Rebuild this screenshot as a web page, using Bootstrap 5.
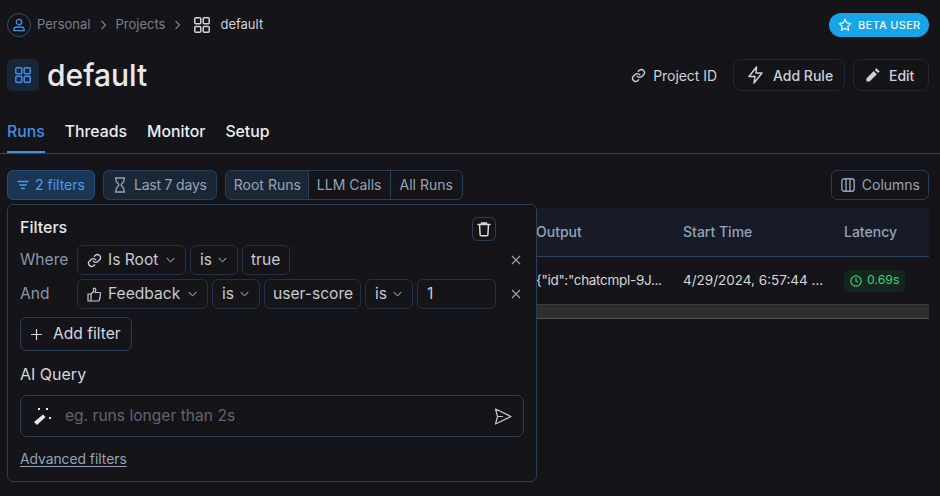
<!doctype html>
<html lang="en"><head><meta charset="utf-8"><title>default</title>
<link rel="stylesheet" href="https://cdn.jsdelivr.net/npm/bootstrap@5.3.0/dist/css/bootstrap.min.css">
<style>
html,body{height:100%}
body{background:#141419;color:#e5e7eb;font-family:Inter,"Noto Sans",sans-serif;font-size:14px;overflow:hidden}
svg{display:block;flex:none}
.shell{padding:13px 11px 0 7px;position:relative;height:496px}
.crumbs{height:24px;font-size:13px;color:#7b7f89}
.avatar{width:24px;height:24px;border:1px solid #33507a;border-radius:50%;color:#3f8fe8;margin-right:6px}
.crumb-sep{margin:0 9px}
.crumb-grid{margin:0 10px 0 4px}
.crumb-cur{color:#d0d3d9}
.beta{height:24px;background:#16a5e6;color:#f4faff;border-radius:12px;font-size:11px;font-weight:500;letter-spacing:.3px;padding:0 9px;gap:6px;width:100px;white-space:nowrap}
.head-row{margin-top:22px;height:32px}
.proj-icon{width:32px;height:32px;background:#18263a;border-radius:5px;color:#3f8fe8;margin-right:8px}
.proj-title{font-size:30px;font-weight:500;color:#e8e9ec;line-height:32px;margin:0}
.plain-act{color:#cdd0d6;font-size:14px;gap:7px;margin-right:16px;letter-spacing:-.05px}
.act-btn{height:32px;border:1px solid #25272e;border-radius:8px;background:transparent;color:#cdd0d6;font-size:14px;font-weight:500;gap:9px;padding:0 0 0 13px;width:112px;white-space:nowrap}
.act-edit{gap:8px;padding:0 0 0 11px;width:76px}
.tab-row{margin:30px -11px 0 -7px;padding:0 7px;border-bottom:1px solid #3a404c;height:33px;gap:20px}
.tab-item{color:#eceef1;font-size:15.8px;font-weight:500;height:32px;line-height:20px;padding-top:1px;text-decoration:none}
.tab-on{color:#3f8fe8;border-bottom:2px solid #3f8fe8}
.tool-row{margin-top:16px;height:30px;gap:8px}
.tool-btn{height:30px;border-radius:6px;border:1px solid #2c3e55;background:#1c2736;color:#94a3b8;font-size:14px;padding:0 9px 1px 10px;gap:8px;white-space:nowrap}
.tool-time{letter-spacing:-.2px}
.tool-blue{background:#1b3654;border-color:#24507f;color:#4a9cf0;padding:0 9px 1px;gap:6px}
.seg{display:flex;height:30px;border:1px solid #2c3e55;border-radius:6px;overflow:hidden}
.seg span{display:flex;align-items:center;padding:0 8px 1px;color:#94a3b8;border-left:1px solid #2c3e55}
.seg span:first-child{border-left:0;background:#1c2736;padding-right:7px}
.seg span:last-child{padding:0 9px 1px}
.tool-line{background:transparent;padding:0 8px 1px 9px;gap:7px}
.runs-table{margin:8px 0 0 529px}
.thead-row{height:49px;background:#161b27;border-bottom:1px solid #30415a;color:#94a3b8;font-weight:500;padding-bottom:1px}
.tbody-row{height:47px;color:#d5d7dc;font-size:13.5px}
.c1{width:147px;flex:none;white-space:nowrap;overflow:hidden}
.c1-out{letter-spacing:-.3px}
.c2{width:161px;flex:none;white-space:nowrap}
.lat-pill{height:22px;background:#15261f;border-radius:5px;color:#3ecf76;font-size:12.3px;gap:5px;padding:0 6px;width:61px}
.scroll-track{height:15px;background:#2e2e2e;border-top:1px solid #3e3e3e;border-bottom:1px solid #555}
.pop{position:absolute;left:7px;top:204px;width:530px;height:278px;background:#141419;border:1px solid #2c3e55;border-radius:6px;padding:12px 12px 0 12px}
.pop-title{font-size:16px;font-weight:500;color:#e5e7eb;height:24px;line-height:20px}
.trash{width:24px;height:24px;border:1px solid #2c3e55;border-radius:6px;color:#d5d7dc;margin-left:auto;margin-right:28px}
.f-row{height:30px;margin-top:4px;gap:4px;font-size:15.6px}
.f-lab{width:53px;color:#8a96a8;flex:none}
.chip{height:30px;border:1px solid #233246;border-radius:6px;color:#c7cad0;padding:0 9px;gap:6px;white-space:nowrap;flex:none}
.chip>svg:last-child:not(:first-child){margin-left:2px}
.chip-root{width:109px}
.chip-fb{width:131px}
.chip-is{width:48px}
.chip-true{width:48px;padding:0 8px}
.chip-score{width:97px;padding:0 8px}
.chip-val{width:79px}
.x-btn{margin-left:auto;color:#98a2b3;margin-right:3px}
.add-f{height:34px;margin-top:8px;border:1px solid #2c3e55;border-radius:6px;color:#d5d7dc;font-size:15.6px;padding:0 10px;gap:11px;width:112px;background:transparent;white-space:nowrap}
.ai-lab{font-size:16px;color:#d5d7dc;margin-top:11px;height:24px;line-height:24px}
.ai-box{margin-top:9px;height:42px;border:1px solid #2c3e55;border-radius:7px;padding:0 11px 0 13px;width:504px}
.ai-ph{color:#5f6672;font-size:15.6px;margin-left:13px}
.adv{display:inline-block;margin-top:12px;color:#94a3b8;font-size:13.8px;text-decoration:underline;text-underline-offset:2px}
</style></head><body>
<div class="shell">
 <div class="d-flex align-items-center crumbs">
  <span class="avatar d-flex align-items-center justify-content-center"><svg width="14" height="14" viewBox="0 0 14 14" fill="none" stroke="currentColor" stroke-width="1.3"><circle cx="7" cy="4" r="2.7"/><path d="M1.7 12.600c0-2.400 1.600-3.600 3.400-3.600h3.800c1.800 0 3.400 1.200 3.400 3.600z" stroke-linejoin="round"/></svg></span>
  <span>Personal</span>
  <svg class="crumb-sep" width="7" height="10" viewBox="0 0 7 10" fill="none" stroke="#7b7f89" stroke-width="1.2"><path d="M1.500 1l4 4-4 4"/></svg>
  <span>Projects</span>
  <svg class="crumb-sep" width="7" height="10" viewBox="0 0 7 10" fill="none" stroke="#7b7f89" stroke-width="1.2"><path d="M1.500 1l4 4-4 4"/></svg>
  <svg class="crumb-grid" width="16" height="16" viewBox="0 0 16 16" fill="none" stroke="#d0d3d9" stroke-width="1.500"><rect x=".8" y=".8" width="6" height="6" rx="1"/><rect x="9.200" y=".8" width="6" height="6" rx="1"/><rect x=".8" y="9.600" width="6" height="5.600" rx="1"/><rect x="9.200" y="9.600" width="6" height="5.600" rx="1"/></svg>
  <span class="crumb-cur">default</span>
  <span class="beta d-flex align-items-center ms-auto"><svg width="14" height="14" viewBox="0 0 14 14" fill="none" stroke="currentColor" stroke-width="1.2" stroke-linejoin="round"><path d="M7 1.200l1.800 3.700 4 .6-2.900 2.800.7 4L7 10.400l-3.600 1.900.7-4L1.200 5.500l4-.6z"/></svg>BETA USER</span>
 </div>
 <div class="d-flex align-items-center head-row">
  <span class="proj-icon d-flex align-items-center justify-content-center"><svg width="16" height="16" viewBox="0 0 16 16" fill="none" stroke="currentColor" stroke-width="1.500"><rect x=".8" y=".8" width="6" height="6" rx="1"/><rect x="9.200" y=".8" width="6" height="6" rx="1"/><rect x=".8" y="9.200" width="6" height="6" rx="1"/><rect x="9.200" y="9.200" width="6" height="6" rx="1"/></svg></span>
  <h1 class="proj-title">default</h1>
  <span class="plain-act d-flex align-items-center ms-auto"><svg width="15" height="15" viewBox="0 0 24 24" fill="none" stroke="currentColor" stroke-width="2.200" stroke-linecap="round"><path d="M10 13a5 5 0 0 0 7.500.5l3-3a5 5 0 0 0-7-7l-1.700 1.700"/><path d="M14 11a5 5 0 0 0-7.500-.5l-3 3a5 5 0 0 0 7 7l1.700-1.700"/></svg>Project ID</span>
  <button class="act-btn d-flex align-items-center me-2"><svg width="17" height="18" viewBox="0 0 17 18" fill="none" stroke="currentColor" stroke-width="1.500" stroke-linejoin="round"><path d="M9.500 1L2 10.500h6L7 17l8-10H9z"/></svg>Add Rule</button>
  <button class="act-btn act-edit d-flex align-items-center"><svg width="16" height="16" viewBox="0 0 16 16" fill="currentColor"><path d="M11.500 1.200l3.200 3.200-1.700 1.700-3.200-3.200zM8.700 4l3.200 3.200-7.300 7.400H1.400v-3.200z"/></svg>Edit</button>
 </div>
 <nav class="d-flex tab-row">
  <a class="tab-item tab-on" href="#">Runs</a><a class="tab-item" href="#">Threads</a><a class="tab-item" href="#">Monitor</a><a class="tab-item" href="#">Setup</a>
 </nav>
 <div class="d-flex tool-row">
  <button class="tool-btn tool-blue d-flex align-items-center"><svg width="12" height="10" viewBox="0 0 12 10" stroke="currentColor" stroke-width="1.3" stroke-linecap="round"><path d="M1 1.500h10M2.800 5h6.400M4.600 8.500h2.800"/></svg>2 filters</button>
  <button class="tool-btn tool-time d-flex align-items-center"><svg width="12" height="16" viewBox="0 0 12 16" fill="none" stroke="currentColor" stroke-width="1.3" stroke-linejoin="round"><path d="M1 1h10M1 15h10M2 1v2.500c0 1.700 2.500 3 2.800 4.500C4.500 9.500 2 10.800 2 12.500V15M10 1v2.500C10 5.200 7.500 6.500 7.200 8c.3 1.500 2.800 2.800 2.800 4.500V15"/></svg>Last 7 days</button>
  <div class="seg"><span>Root Runs</span><span>LLM Calls</span><span>All Runs</span></div>
  <button class="tool-btn tool-line d-flex align-items-center ms-auto"><svg width="14" height="14" viewBox="0 0 14 14" fill="none" stroke="currentColor" stroke-width="1.4"><rect x=".8" y=".8" width="12.400" height="12.400" rx="2.500"/><path d="M5 1v12M9 1v12"/></svg>Columns</button>
 </div>
 <div class="runs-table">
  <div class="d-flex align-items-center thead-row"><div class="c1">Output</div><div class="c2">Start Time</div><div>Latency</div></div>
  <div class="d-flex align-items-center tbody-row"><div class="c1 c1-out">{"id":"chatcmpl-9J...</div><div class="c2">4/29/2024, 6:57:44 ...</div><div class="lat-pill d-flex align-items-center"><svg width="12" height="12" viewBox="0 0 12 12" fill="none" stroke="currentColor" stroke-width="1.200"><circle cx="6" cy="6" r="5.200"/><path d="M6 3v3.200l2 1"/></svg>0.69s</div></div>
  <div class="scroll-track"></div>
 </div>
 <div class="pop">
  <div class="d-flex align-items-center"><div class="pop-title">Filters</div><span class="trash d-flex align-items-center justify-content-center"><svg width="14" height="15" viewBox="0 0 14 15" fill="none" stroke="currentColor" stroke-width="1.500" stroke-linecap="round" stroke-linejoin="round"><path d="M1 2.500h12M4.500 2.500V1h5v1.500M2.500 2.500l.6 10a1.300 1.300 0 0 0 1.300 1.300h5.200a1.300 1.300 0 0 0 1.300-1.300l.6-10"/></svg></span></div>
  <div class="d-flex align-items-center f-row">
   <div class="f-lab">Where</div>
   <div class="chip chip-root d-flex align-items-center"><svg width="15" height="15" viewBox="0 0 24 24" fill="none" stroke="currentColor" stroke-width="2.200" stroke-linecap="round"><path d="M10 13a5 5 0 0 0 7.500.5l3-3a5 5 0 0 0-7-7l-1.700 1.700"/><path d="M14 11a5 5 0 0 0-7.500-.5l-3 3a5 5 0 0 0 7 7l1.700-1.700"/></svg>Is Root<svg width="9" height="6" viewBox="0 0 9 6" fill="none" stroke="#7f8896" stroke-width="1.100"><path d="M.7 1l3.800 3.800L8.300 1"/></svg></div>
   <div class="chip chip-is d-flex align-items-center">is<svg width="9" height="6" viewBox="0 0 9 6" fill="none" stroke="#7f8896" stroke-width="1.100"><path d="M.7 1l3.800 3.800L8.300 1"/></svg></div>
   <div class="chip chip-true d-flex align-items-center">true</div>
   <svg class="x-btn" width="10" height="10" viewBox="0 0 10 10" stroke="currentColor" stroke-width="1.100"><path d="M1 1l8 8M9 1l-8 8"/></svg>
  </div>
  <div class="d-flex align-items-center f-row">
   <div class="f-lab">And</div>
   <div class="chip chip-fb d-flex align-items-center"><svg width="15" height="15" viewBox="0 0 15 15" fill="none" stroke="currentColor" stroke-width="1.200" stroke-linejoin="round"><path d="M1 7h3v7H1zM4 7l2.500-2.500V1.800c0-.9 1.800-1 2.200.3.300 1-.2 2.400-.7 3.400h4.300c1 0 1.400.9 1.200 1.700l-1 5.400c-.2.900-.8 1.400-1.600 1.400H4"/></svg>Feedback<svg width="9" height="6" viewBox="0 0 9 6" fill="none" stroke="#7f8896" stroke-width="1.100"><path d="M.7 1l3.800 3.800L8.300 1"/></svg></div>
   <div class="chip chip-is d-flex align-items-center">is<svg width="9" height="6" viewBox="0 0 9 6" fill="none" stroke="#7f8896" stroke-width="1.100"><path d="M.7 1l3.800 3.800L8.300 1"/></svg></div>
   <div class="chip chip-score d-flex align-items-center">user-score</div>
   <div class="chip chip-is d-flex align-items-center">is<svg width="9" height="6" viewBox="0 0 9 6" fill="none" stroke="#7f8896" stroke-width="1.100"><path d="M.7 1l3.800 3.800L8.300 1"/></svg></div>
   <div class="chip chip-val d-flex align-items-center">1</div>
   <svg class="x-btn" width="10" height="10" viewBox="0 0 10 10" stroke="currentColor" stroke-width="1.100"><path d="M1 1l8 8M9 1l-8 8"/></svg>
  </div>
  <button class="add-f d-flex align-items-center"><svg width="11" height="11" viewBox="0 0 11 11" stroke="currentColor" stroke-width="1.200"><path d="M5.500 0v11M0 5.500h11"/></svg>Add filter</button>
  <div class="ai-lab">AI Query</div>
  <div class="ai-box d-flex align-items-center">
   <svg width="18" height="18" viewBox="0 0 18 18"><path d="M0 15L9 7.500l2.500 2.500L3 18z" fill="#e5e7eb"/><path d="M4 1l2 2M6 1L4 3M12 1l2 2M14 1l-2 2M15 10l2 2M17 10l-2 2" stroke="#e5e7eb" stroke-width="1"/></svg>
   <span class="ai-ph">eg. runs longer than 2s</span>
   <svg class="ms-auto" width="18" height="17" viewBox="0 0 18 17" fill="none" stroke="#c4c6cb" stroke-width="1.200" stroke-linejoin="round"><path d="M1.500 1l15.500 7.500L1.500 16l2-7.500zM3.500 8.500H9"/></svg>
  </div>
  <a class="adv" href="#">Advanced filters</a>
 </div>
</div>
</body></html>
